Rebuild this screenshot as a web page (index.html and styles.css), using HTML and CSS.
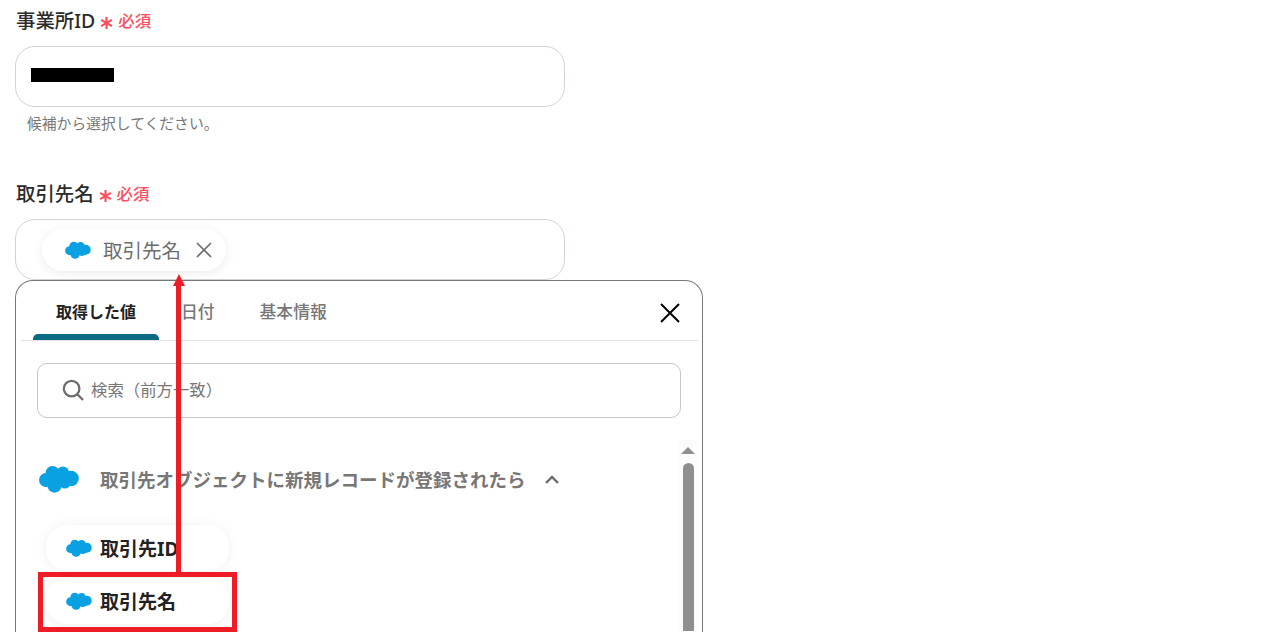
FILE: index.html
```html
<!DOCTYPE html>
<html lang="ja">
<head>
    <meta charset="UTF-8">
    <title>取引先名</title>
    <link rel="stylesheet" href="styles.css">
</head>
<body>
    <svg class="defs" width="0" height="0">
        <symbol id="cloud" viewBox="0 0 40 28">
            <circle cx="13.5" cy="8" r="7"/>
            <circle cx="24" cy="7.5" r="6"/>
            <circle cx="32" cy="13.5" r="7.8"/>
            <circle cx="7" cy="15" r="7"/>
            <circle cx="15.5" cy="20.5" r="7.2"/>
            <circle cx="26" cy="18" r="5.5"/>
            <rect x="8" y="6" width="24" height="15"/>
        </symbol>
        <symbol id="star" viewBox="0 0 14 14">
            <path d="M7 0.5V13.5M1.2 3.6 12.8 10.4M12.8 3.6 1.2 10.4"/>
        </symbol>
    </svg>

    <div class="page">
        <div class="field-label">事業所ID <svg class="star"><use href="#star"/></svg><span class="req">必須</span></div>
        <div class="field"><span class="masked"></span></div>
        <p class="hint">候補から選択してください。</p>

        <div class="field-label second">取引先名 <svg class="star"><use href="#star"/></svg><span class="req">必須</span></div>
        <div class="field">
            <span class="chip chip-selected">
                <svg class="cloud-sm"><use href="#cloud"/></svg>
                取引先名
                <svg class="chip-x" viewBox="0 0 16 16"><path d="M1 1 15 15M15 1 1 15"/></svg>
            </span>
        </div>

        <div class="panel">
            <div class="tabs">
                <div class="tab active">取得した値</div>
                <div class="tab">日付</div>
                <div class="tab">基本情報</div>
                <svg class="close" viewBox="0 0 20 20"><path d="M1 1 19 19M19 1 1 19"/></svg>
            </div>
            <div class="search">
                <svg class="search-icon" viewBox="0 0 24 24"><circle cx="10.5" cy="10.5" r="8.5"/><path d="M16.5 16.5 23 23"/></svg>
                <span class="search-text">検索（前方一致）</span>
            </div>
            <div class="list">
                <div class="list-body">
                    <div class="group">
                        <svg class="cloud-lg"><use href="#cloud"/></svg>
                        <span class="group-name">取引先オブジェクトに新規レコードが登録されたら</span>
                        <svg class="chevron" viewBox="0 0 14 9"><path d="M1 8 7 2l6 6"/></svg>
                    </div>
                    <div class="chip chip-item"><svg class="cloud-sm"><use href="#cloud"/></svg>取引先ID</div>
                    <div class="chip chip-item"><svg class="cloud-sm"><use href="#cloud"/></svg>取引先名</div>
                </div>
                <div class="scrollbar">
                    <div class="scroll-up"></div>
                    <div class="scroll-thumb"></div>
                </div>
            </div>
        </div>
    </div>

    <!-- annotation on top of the screenshot -->
    <div class="mark-box"></div>
    <div class="mark-line"></div>
    <div class="mark-head"></div>
</body>
</html>
```

FILE: styles.css
```css
html, body {
    margin: 0;
    height: 632px;
    overflow: hidden;
    background: #fff;
}
body {
    font-family: "Noto Sans", "Noto Sans CJK JP", sans-serif;
    color: #2b2b2b;
    position: relative;
}
.defs {
    position: absolute;
}
.page {
    padding: 6px 0 0 15px;
    width: 688px;
}
.field-label {
    display: flex;
    align-items: center;
    height: 27px;
    padding-left: 1px;
    font-size: 19.4px;
    font-weight: 500;
    white-space: pre;
}
.field-label.second {
    margin-top: 46px;
}
.star {
    width: 13px;
    height: 14px;
    margin: 6px 5px 0 0;
    fill: none;
    stroke: #ff4d5e;
    stroke-width: 2.3;
}
.req {
    color: #ff4d5e;
    font-size: 16.4px;
    font-weight: 500;
}
.field {
    box-sizing: border-box;
    width: 550px;
    height: 61px;
    margin-top: 13px;
    padding: 0 15px;
    display: flex;
    align-items: center;
    border: 1px solid #cfd3da;
    border-radius: 20px;
}
.masked {
    width: 83px;
    height: 14px;
    margin-bottom: 3px;
    background: #000;
}
.hint {
    margin: 6px 0 0 12px;
    font-size: 14.8px;
    line-height: 20px;
    color: #777;
}
.chip {
    display: flex;
    align-items: center;
    box-sizing: border-box;
    height: 42px;
    background: #fff;
    border-radius: 21px;
    box-shadow: 0 2px 12px rgba(0, 0, 0, 0.08);
}
.chip-selected {
    width: 184px;
    margin-left: 11px;
    padding-left: 23px;
    font-size: 19.5px;
    color: #6d6d6d;
}
.cloud-sm {
    width: 26px;
    height: 18px;
    fill: #0aa1e2;
    flex: none;
}
.chip-selected .cloud-sm {
    margin-right: 12px;
}
.chip-x {
    width: 16px;
    height: 16px;
    margin-left: 15px;
    fill: none;
    stroke: #6d6d6d;
    stroke-width: 1.7;
}
.panel {
    box-sizing: border-box;
    width: 688px;
    height: 352px;
    overflow: hidden;
    padding: 0 4px 0 5px;
    border: 1px solid #777;
    border-bottom: 0;
    border-radius: 18px 18px 0 0;
}
.tabs {
    display: flex;
    align-items: stretch;
    height: 59px;
    border-bottom: 1px solid #e3e3e3;
    position: relative;
    padding-left: 12px;
}
.tab {
    display: flex;
    align-items: center;
    justify-content: center;
    box-sizing: border-box;
    position: relative;
    font-size: 16.8px;
    font-weight: 500;
    color: #777;
    margin-right: 45px;
}
.tab.active {
    width: 126px;
    margin-right: 22px;
    font-size: 16px;
    color: #222;
    font-weight: 700;
}
.tab.active::after {
    content: "";
    position: absolute;
    left: 0;
    right: 0;
    bottom: 0;
    height: 6px;
    background: #0b6a84;
    border-radius: 5px 5px 0 0;
}
.close {
    position: absolute;
    right: 18px;
    top: 22px;
    width: 20px;
    height: 20px;
    fill: none;
    stroke: #000;
    stroke-width: 2;
}
.search {
    box-sizing: border-box;
    display: flex;
    align-items: center;
    height: 55px;
    margin: 22px 17px 0 16px;
    padding-left: 24px;
    border: 1px solid #c6c6c6;
    border-radius: 10px;
    font-size: 16.4px;
    color: #777;
}
.search-icon {
    width: 22px;
    height: 22px;
    margin: 0 7px 2px 0;
    fill: none;
    stroke: #6d6d6d;
    stroke-width: 2.4;
}
.search-text {
    margin-bottom: 3px;
}
.list {
    display: flex;
    margin-top: 22px;
}
.list-body {
    flex: 1;
    padding-left: 18px;
}
.group {
    display: flex;
    align-items: center;
    height: 28px;
    margin-top: 25px;
}
.cloud-lg {
    width: 40px;
    height: 28px;
    fill: #0aa1e2;
}
.group-name {
    margin-left: 21px;
    font-size: 18.5px;
    font-weight: 700;
    color: #777;
    white-space: nowrap;
}
.chevron {
    width: 14px;
    height: 9px;
    margin-left: 19px;
    fill: none;
    stroke: #6d6d6d;
    stroke-width: 2.4;
}
.chip-item {
    width: 183px;
    height: 46px;
    margin: 0 0 7px 7px;
    padding-left: 20px;
    font-size: 19px;
    font-weight: 700;
    color: #222;
    box-shadow: 0 1px 12px rgba(0, 0, 0, 0.07);
}
.group + .chip-item {
    margin-top: 32px;
}
.chip-item .cloud-sm {
    margin-right: 8px;
}
.scrollbar {
    width: 18px;
    margin-right: 1px;
    background: #fcfcfc;
    display: flex;
    flex-direction: column;
    align-items: center;
    padding-top: 7px;
}
.scroll-up {
    width: 0;
    height: 0;
    border: 7px solid transparent;
    border-top: 0;
    border-bottom: 7px solid #8f8f8f;
}
.scroll-thumb {
    flex: 1;
    width: 11px;
    margin-top: 9px;
    background: #8f8f8f;
    border-radius: 6px 6px 0 0;
}
.mark-box {
    position: absolute;
    left: 38px;
    top: 572px;
    width: 199px;
    height: 60px;
    box-sizing: border-box;
    border: 5px solid #ee1c25;
}
.mark-line {
    position: absolute;
    left: 176px;
    top: 284px;
    width: 5px;
    height: 288px;
    background: #ee1c25;
}
.mark-head {
    position: absolute;
    left: 173px;
    top: 274px;
    width: 0;
    height: 0;
    border-left: 6px solid transparent;
    border-right: 6px solid transparent;
    border-bottom: 12px solid #ee1c25;
}
```
